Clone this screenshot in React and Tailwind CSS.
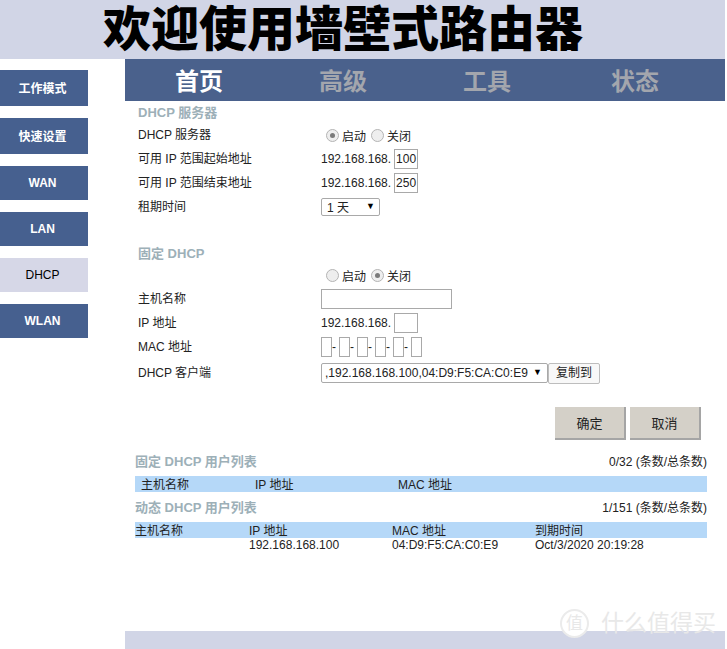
const sideItems = [
    { label: '工作模式', h: 'h-[36px] pt-[2px]' },
    { label: '快速设置', h: 'h-[36px] pt-[2px]' },
    { label: 'WAN', h: 'h-[34px]' },
    { label: 'LAN', h: 'h-[34px]' },
    { label: 'DHCP', h: 'h-[34px]', active: true },
    { label: 'WLAN', h: 'h-[34px]' },
];

const navItems = ['首页', '高级', '工具', '状态'];

const Radio = ({ checked }) => (
    <span className="w-[13px] h-[13px] rounded-full border border-[#b4b4b4] bg-[#eeeeee] flex items-center justify-center shrink-0">
        {checked && <span className="w-[5px] h-[5px] rounded-full bg-[#7a7a7a]" />}
    </span>
);

const RadioPair = ({ on }) => (
    <div className="flex items-center pl-[5px]">
        <Radio checked={on} />
        <span className="ml-[3px] mt-[3px]">启动</span>
        <span className="ml-[5px]"><Radio checked={!on} /></span>
        <span className="ml-[3px] mt-[3px]">关闭</span>
    </div>
);

const Row = ({ label, children, h = 'h-[24px]' }) => (
    <div className={`flex items-center ${h}`}>
        <div className="w-[196px] pl-[13px] shrink-0">{label}</div>
        <div className="flex items-center">{children}</div>
    </div>
);

const Box = ({ value, w = 'w-[24px]', h = 'h-[20px]' }) => (
    <input
        readOnly
        value={value || ''}
        className={`${w} ${h} border border-[#a9a9a9] bg-white text-[12px] text-center outline-none px-0`}
    />
);

const Title = ({ children, className = '' }) => (
    <div className={`text-[13px] font-bold text-[#9db0b8] ${className}`}>{children}</div>
);

const ListHead = ({ title, count }) => (
    <div className="flex items-center justify-between h-[16px] pl-[10px] pr-[18px]">
        <Title>{title}</Title>
        <span>{count}</span>
    </div>
);

export default function App() {
    return (
        <div
            className="w-[727px] h-[649px] bg-white text-[12px] text-[#222222] overflow-hidden"
            style={{ fontFamily: '"Liberation Sans", "Noto Sans CJK SC", sans-serif' }}
        >
            <div className="w-[725px] h-[59px] bg-[#d1d5e6] flex items-center pl-[103px]">
                <h1 className="text-[48px] leading-none font-black text-black whitespace-nowrap">欢迎使用墙壁式路由器</h1>
            </div>

            <div className="flex w-[725px] h-[590px]">
                <div className="w-[125px] shrink-0 pt-[11px]">
                    {sideItems.map((item) => (
                        <div
                            key={item.label}
                            className={`w-[88px] ${item.h} mb-[12px] pr-[3px] flex items-center justify-center ${
                                item.active ? 'bg-[#d6d7e7] text-black' : 'bg-[#46608f] text-white font-bold'
                            }`}
                        >
                            {item.label}
                        </div>
                    ))}
                </div>

                <div className="w-[600px] flex flex-col">
                    <div className="h-[42px] bg-[#4a618c] flex shrink-0 pl-[2px]">
                        {navItems.map((item, i) => (
                            <div
                                key={item}
                                className={`flex items-center justify-center text-[24px] font-bold pt-[3px] ${
                                    i === 3 ? 'w-[152px]' : 'w-[144px]'
                                } ${i === 0 ? 'text-white' : 'text-[#a3a6ad]'}`}
                            >
                                {item}
                            </div>
                        ))}
                    </div>

                    <Title className="pl-[13px] mt-[4px] h-[16px] leading-[16px]">DHCP 服务器</Title>
                    <div className="mt-[2px]">
                        <Row label="DHCP 服务器"><RadioPair on /></Row>
                        <Row label="可用 IP 范围起始地址">
                            <span className="mr-[3px]">192.168.168.</span>
                            <Box value="100" />
                        </Row>
                        <Row label="可用 IP 范围结束地址">
                            <span className="mr-[3px]">192.168.168.</span>
                            <Box value="250" />
                        </Row>
                        <Row label="租期时间">
                            <div className="relative w-[59px] h-[18px]">
                                <select className="appearance-none w-full h-full border border-[#a9a9a9] rounded-[2px] bg-white pl-[5px] text-[12px] outline-none">
                                    <option>1 天</option>
                                </select>
                                <span className="absolute right-[5px] top-[2px] text-[9px] text-black pointer-events-none">▼</span>
                            </div>
                        </Row>
                    </div>

                    <Title className="pl-[13px] mt-[27px] h-[16px] leading-[16px]">固定 DHCP</Title>
                    <div className="mt-[1px]">
                        <Row label=""><RadioPair on={false} /></Row>
                        <Row label="主机名称">
                            <Box w="w-[131px]" />
                        </Row>
                        <Row label="IP 地址">
                            <span className="mr-[3px]">192.168.168.</span>
                            <Box />
                        </Row>
                        <Row label="MAC 地址">
                            {[0, 1, 2, 3, 4, 5].map((n) => (
                                <div key={n} className="flex items-center">
                                    <Box w="w-[11px]" />
                                    {n < 5 && <span className="w-[7px] text-left">-</span>}
                                </div>
                            ))}
                        </Row>
                        <Row label="DHCP 客户端" h="h-[28px]">
                            <div className="relative w-[227px] h-[20px]">
                                <select className="appearance-none w-full h-full border border-[#a9a9a9] rounded-[2px] bg-white pl-[3px] text-[12px] outline-none">
                                    <option>,192.168.168.100,04:D9:F5:CA:C0:E9</option>
                                </select>
                                <span className="absolute right-[6px] top-[3px] text-[9px] text-black pointer-events-none">▼</span>
                            </div>
                            <button className="w-[52px] h-[21px] border border-[#bdbdbd] rounded-[2px] bg-[#f8f8f8] text-[12px]">复制到</button>
                        </Row>
                    </div>

                    <div className="flex justify-end gap-[4px] pr-[24px] mt-[20px]">
                        <button className="w-[71px] h-[33px] pt-[2px] bg-[#d4d0c8] border-r-2 border-b-2 border-[#a5a5a5] text-[13px]">确定</button>
                        <button className="w-[71px] h-[33px] pt-[2px] bg-[#d4d0c8] border-r-2 border-b-2 border-[#a5a5a5] text-[13px]">取消</button>
                    </div>

                    <div className="mt-[14px]">
                        <ListHead title="固定 DHCP 用户列表" count="0/32 (条数/总条数)" />
                        <div className="ml-[10px] mr-[18px] mt-[6px] h-[16px] pt-[2px] bg-[#b5d8f8] flex items-center pl-[6px]">
                            <span className="w-[114px]">主机名称</span>
                            <span className="w-[143px]">IP 地址</span>
                            <span>MAC 地址</span>
                        </div>
                    </div>

                    <div className="mt-[8px]">
                        <ListHead title="动态 DHCP 用户列表" count="1/151 (条数/总条数)" />
                        <div className="ml-[10px] mr-[18px] mt-[6px] h-[16px] pt-[2px] bg-[#b5d8f8] flex items-center">
                            <span className="w-[114px]">主机名称</span>
                            <span className="w-[143px]">IP 地址</span>
                            <span className="w-[143px]">MAC 地址</span>
                            <span>到期时间</span>
                        </div>
                        <div className="ml-[10px] mr-[18px] h-[14px] flex items-center">
                            <span className="w-[114px]" />
                            <span className="w-[143px]">192.168.168.100</span>
                            <span className="w-[143px]">04:D9:F5:CA:C0:E9</span>
                            <span>Oct/3/2020 20:19:28</span>
                        </div>
                    </div>

                    <div className="mt-auto h-[18px] bg-[#d1d5e6] shrink-0" />
                </div>
            </div>

            {/* watermark sits over the bottom band */}
            <div className="absolute left-[560px] top-[609px] flex items-center text-[#e8e8e8] whitespace-nowrap leading-none">
                <span className="w-[29px] h-[29px] rounded-full border-2 border-[#ebebeb] bg-white flex items-center justify-center text-[17px]">值</span>
                <span className="ml-[12px] text-[23px]">什么值得买</span>
            </div>
        </div>
    );
}
